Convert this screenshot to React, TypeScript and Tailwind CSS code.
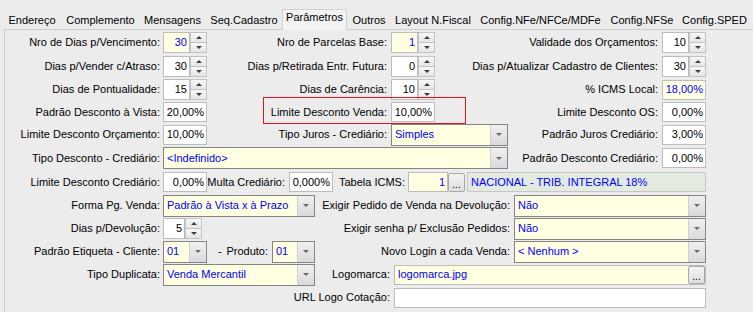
import type { ReactNode } from 'react';

const YELLOW = 'bg-[#ffffe1] text-[#0000ff]';

const TABS = [
  { label: 'Endereço', w: 'w-[60px]' },
  { label: 'Complemento', w: 'w-[77px]' },
  { label: 'Mensagens', w: 'w-[67px]' },
  { label: 'Seq.Cadastro', w: 'w-[76px]' },
  { label: 'Parâmetros', w: 'w-[65px]', active: true },
  { label: 'Outros', w: 'w-[44px]' },
  { label: 'Layout N.Fiscal', w: 'w-[84px]' },
  { label: 'Config.NFe/NFCe/MDFe', w: 'w-[131px]' },
  { label: 'Config.NFSe', w: 'w-[72px]' },
  { label: 'Config.SPED', w: 'w-[73px]' },
];

function Lbl({ w, pr = 'pr-[4px]', children }: { w: string; pr?: string; children: ReactNode }) {
  return <div className={`${w} ${pr} shrink-0 whitespace-nowrap text-right`}>{children}</div>;
}

function Edit({ w, value = '', yellow = false }: { w: string; value?: string; yellow?: boolean }) {
  return <div className={`${w} flex h-[20px] shrink-0 items-center justify-end border border-[#bdbdbd] pr-[2px] ${yellow ? YELLOW : 'bg-white'}`}>{value}</div>;
}

function Arrow({ up = false }: { up?: boolean }) {
  return up
    ? <div className="h-0 w-0 border-x-[3px] border-b-[3px] border-x-transparent border-b-[#3c3c3c]" />
    : <div className="h-0 w-0 border-x-[3px] border-t-[3px] border-x-transparent border-t-[#3c3c3c]" />;
}

function Spin({ w = 'w-[27px]', value, yellow = false }: { w?: string; value: string; yellow?: boolean }) {
  return <div className="flex h-[21px] shrink-0">
    <div className={`${w} flex items-center justify-end border border-[#bdbdbd] pr-[2px] ${yellow ? YELLOW : 'bg-white'}`}>{value}</div>
    <div className="flex w-[17px] flex-col">
      <div className="flex h-[11px] items-center justify-center border border-[#c4c4c4] bg-linear-to-b from-[#f7f7f7] to-[#e6e6e6]"><Arrow up /></div>
      <div className="flex h-[10px] items-center justify-center border border-t-0 border-[#c4c4c4] bg-linear-to-b from-[#f7f7f7] to-[#e6e6e6]"><Arrow /></div>
    </div>
  </div>;
}

function Combo({ w, value }: { w: string; value: string }) {
  return <div className={`${w} flex h-[22px] shrink-0 border border-[#858585] bg-[#ffffe1]`}>
    <div className="flex flex-1 items-center overflow-hidden whitespace-nowrap pl-[3px] text-[#0000ff]">{value}</div>
    <div className="flex w-[17px] items-center justify-center border-l border-[#d0d0d0] bg-linear-to-b from-[#f0f0f0] to-[#d9dadc]">
      <div className="h-0 w-0 border-x-[3px] border-t-[3px] border-x-transparent border-t-[#6a6a6a]" />
    </div>
  </div>;
}

function Dots({ h = 'h-[18px]' }: { h?: string }) {
  return <div className={`${h} flex w-[17px] shrink-0 items-end justify-center rounded-[2px] border border-[#a9a9a9] bg-linear-to-b from-[#f4f4f4] to-[#dedede] pb-[1px] text-[10px] leading-[10px] text-black`}>...</div>;
}

export default function App() {
  return <div className="h-[312px] w-[753px] overflow-hidden bg-[#ececec] font-['Liberation_Sans',Arial,sans-serif] text-[11px] leading-[13px] text-black">
    <div className="flex h-[29px] items-end pl-[2px]">
      {TABS.map((tab) => tab.active
        ? <div key={tab.label} className={`${tab.w} relative z-10 -mb-px flex h-[21px] shrink-0 justify-center border border-b-0 border-[#d2d2d2] bg-[#f3f3f3] pt-[1px]`}>{tab.label}</div>
        : <div key={tab.label} className={`${tab.w} flex h-[18px] shrink-0 items-center justify-center whitespace-nowrap`}>{tab.label}</div>)}
    </div>

    <div className="ml-[4px] h-[283px] border-l border-t border-[#cdcdcd] pt-[1px]">
      <div className="flex h-[23px] items-center">
        <Lbl w="w-[158px]" pr="pr-[3px]">Nro de Dias p/Vencimento:</Lbl>
        <Spin value="30" yellow />
        <Lbl w="w-[184px]">Nro de Parcelas Base:</Lbl>
        <Spin value="1" yellow />
        <Lbl w="w-[227px]">Validade dos Orçamentos:</Lbl>
        <Spin value="10" />
      </div>

      <div className="flex h-[24px] items-center">
        <Lbl w="w-[158px]" pr="pr-[3px]">Dias p/Vender c/Atraso:</Lbl>
        <Spin value="30" />
        <Lbl w="w-[184px]">Dias p/Retirada Entr. Futura:</Lbl>
        <Spin value="0" />
        <Lbl w="w-[227px]">Dias p/Atualizar Cadastro de Clientes:</Lbl>
        <Spin value="30" />
      </div>

      <div className="flex h-[23px] items-center">
        <Lbl w="w-[158px]" pr="pr-[3px]">Dias de Pontualidade:</Lbl>
        <Spin value="15" />
        <Lbl w="w-[184px]">Dias de Carência:</Lbl>
        <Spin value="10" />
        <Lbl w="w-[227px]">% ICMS Local:</Lbl>
        <Edit w="w-[44px]" value="18,00%" yellow />
      </div>

      <div className="relative flex h-[22px] items-center">
        <Lbl w="w-[158px]" pr="pr-[3px]">Padrão Desconto à Vista:</Lbl>
        <Edit w="w-[44px]" value="20,00%" />
        <Lbl w="w-[184px]">Limite Desconto Venda:</Lbl>
        <Edit w="w-[44px]" value="10,00%" />
        <Lbl w="w-[227px]">Limite Desconto OS:</Lbl>
        <Edit w="w-[44px]" value="0,00%" />
        {/* marcação vermelha */}
        <div className="pointer-events-none absolute left-[258px] top-[-4px] h-[27px] w-[203px] border border-[#e81123]" />
      </div>

      <div className="flex h-[23px] items-center">
        <Lbl w="w-[158px]" pr="pr-[3px]">Limite Desconto Orçamento:</Lbl>
        <Edit w="w-[44px]" value="10,00%" />
        <Lbl w="w-[184px]">Tipo Juros - Crediário:</Lbl>
        <Combo w="w-[117px]" value="Simples" />
        <Lbl w="w-[154px]">Padrão Juros Crediário:</Lbl>
        <Edit w="w-[44px]" value="3,00%" />
      </div>

      <div className="flex h-[24px] items-center">
        <Lbl w="w-[158px]" pr="pr-[3px]">Tipo Desconto - Crediário:</Lbl>
        <Combo w="w-[345px]" value="<Indefinido>" />
        <Lbl w="w-[154px]">Padrão Desconto Crediário:</Lbl>
        <Edit w="w-[44px]" value="0,00%" />
      </div>

      <div className="flex h-[24px] items-center">
        <Lbl w="w-[158px]" pr="pr-[3px]">Limite Desconto Crediário:</Lbl>
        <Edit w="w-[44px]" value="0,00%" />
        <Lbl w="w-[82px]">Multa Crediário:</Lbl>
        <Edit w="w-[44px]" value="0,000%" />
        <Lbl w="w-[75px]" pr="pr-[3px]">Tabela ICMS:</Lbl>
        <Edit w="w-[40px]" value="1" yellow />
        <Dots h="h-[19px]" />
        <div className="ml-[2px] flex h-[20px] w-[239px] shrink-0 items-center border border-[#c6c6c6] bg-[#e3eadf] pl-[3px] text-[#0000ff]">NACIONAL - TRIB. INTEGRAL 18%</div>
      </div>

      <div className="flex h-[23px] items-center">
        <Lbl w="w-[158px]" pr="pr-[3px]">Forma Pg. Venda:</Lbl>
        <Combo w="w-[152px]" value="Padrão à Vista x à Prazo" />
        <Lbl w="w-[199px]">Exigir Pedido de Venda na Devolução:</Lbl>
        <Combo w="w-[192px]" value="Não" />
      </div>

      <div className="flex h-[23px] items-center">
        <Lbl w="w-[158px]" pr="pr-[3px]">Dias p/Devolução:</Lbl>
        <Spin w="w-[22px]" value="5" />
        <Lbl w="w-[312px]">Exigir senha p/ Exclusão Pedidos:</Lbl>
        <Combo w="w-[192px]" value="Não" />
      </div>

      <div className="flex h-[23px] items-center">
        <Lbl w="w-[158px]" pr="pr-[3px]">Padrão Etiqueta - Cliente:</Lbl>
        <Combo w="w-[44px]" value="01" />
        <div className="flex w-[65px] shrink-0 justify-between pl-[11px] pr-[4px]"><span>-</span><span>Produto:</span></div>
        <Combo w="w-[43px]" value="01" />
        <Lbl w="w-[199px]">Novo Login a cada Venda:</Lbl>
        <Combo w="w-[192px]" value="< Nenhum >" />
      </div>

      <div className="flex h-[23px] items-center">
        <Lbl w="w-[158px]" pr="pr-[3px]">Tipo Duplicata:</Lbl>
        <Combo w="w-[152px]" value="Venda Mercantil" />
        <Lbl w="w-[79px]">Logomarca:</Lbl>
        <div className="flex h-[20px] w-[312px] shrink-0 items-center border border-[#bdbdbd] bg-[#ffffe1] text-[#0000ff]">
          <span className="flex-1 pl-[3px]">logomarca.jpg</span>
          <Dots />
        </div>
      </div>

      <div className="flex h-[23px] items-center">
        <Lbl w="w-[389px]">URL Logo Cotação:</Lbl>
        <Edit w="w-[312px]" />
      </div>
    </div>
  </div>;
}
